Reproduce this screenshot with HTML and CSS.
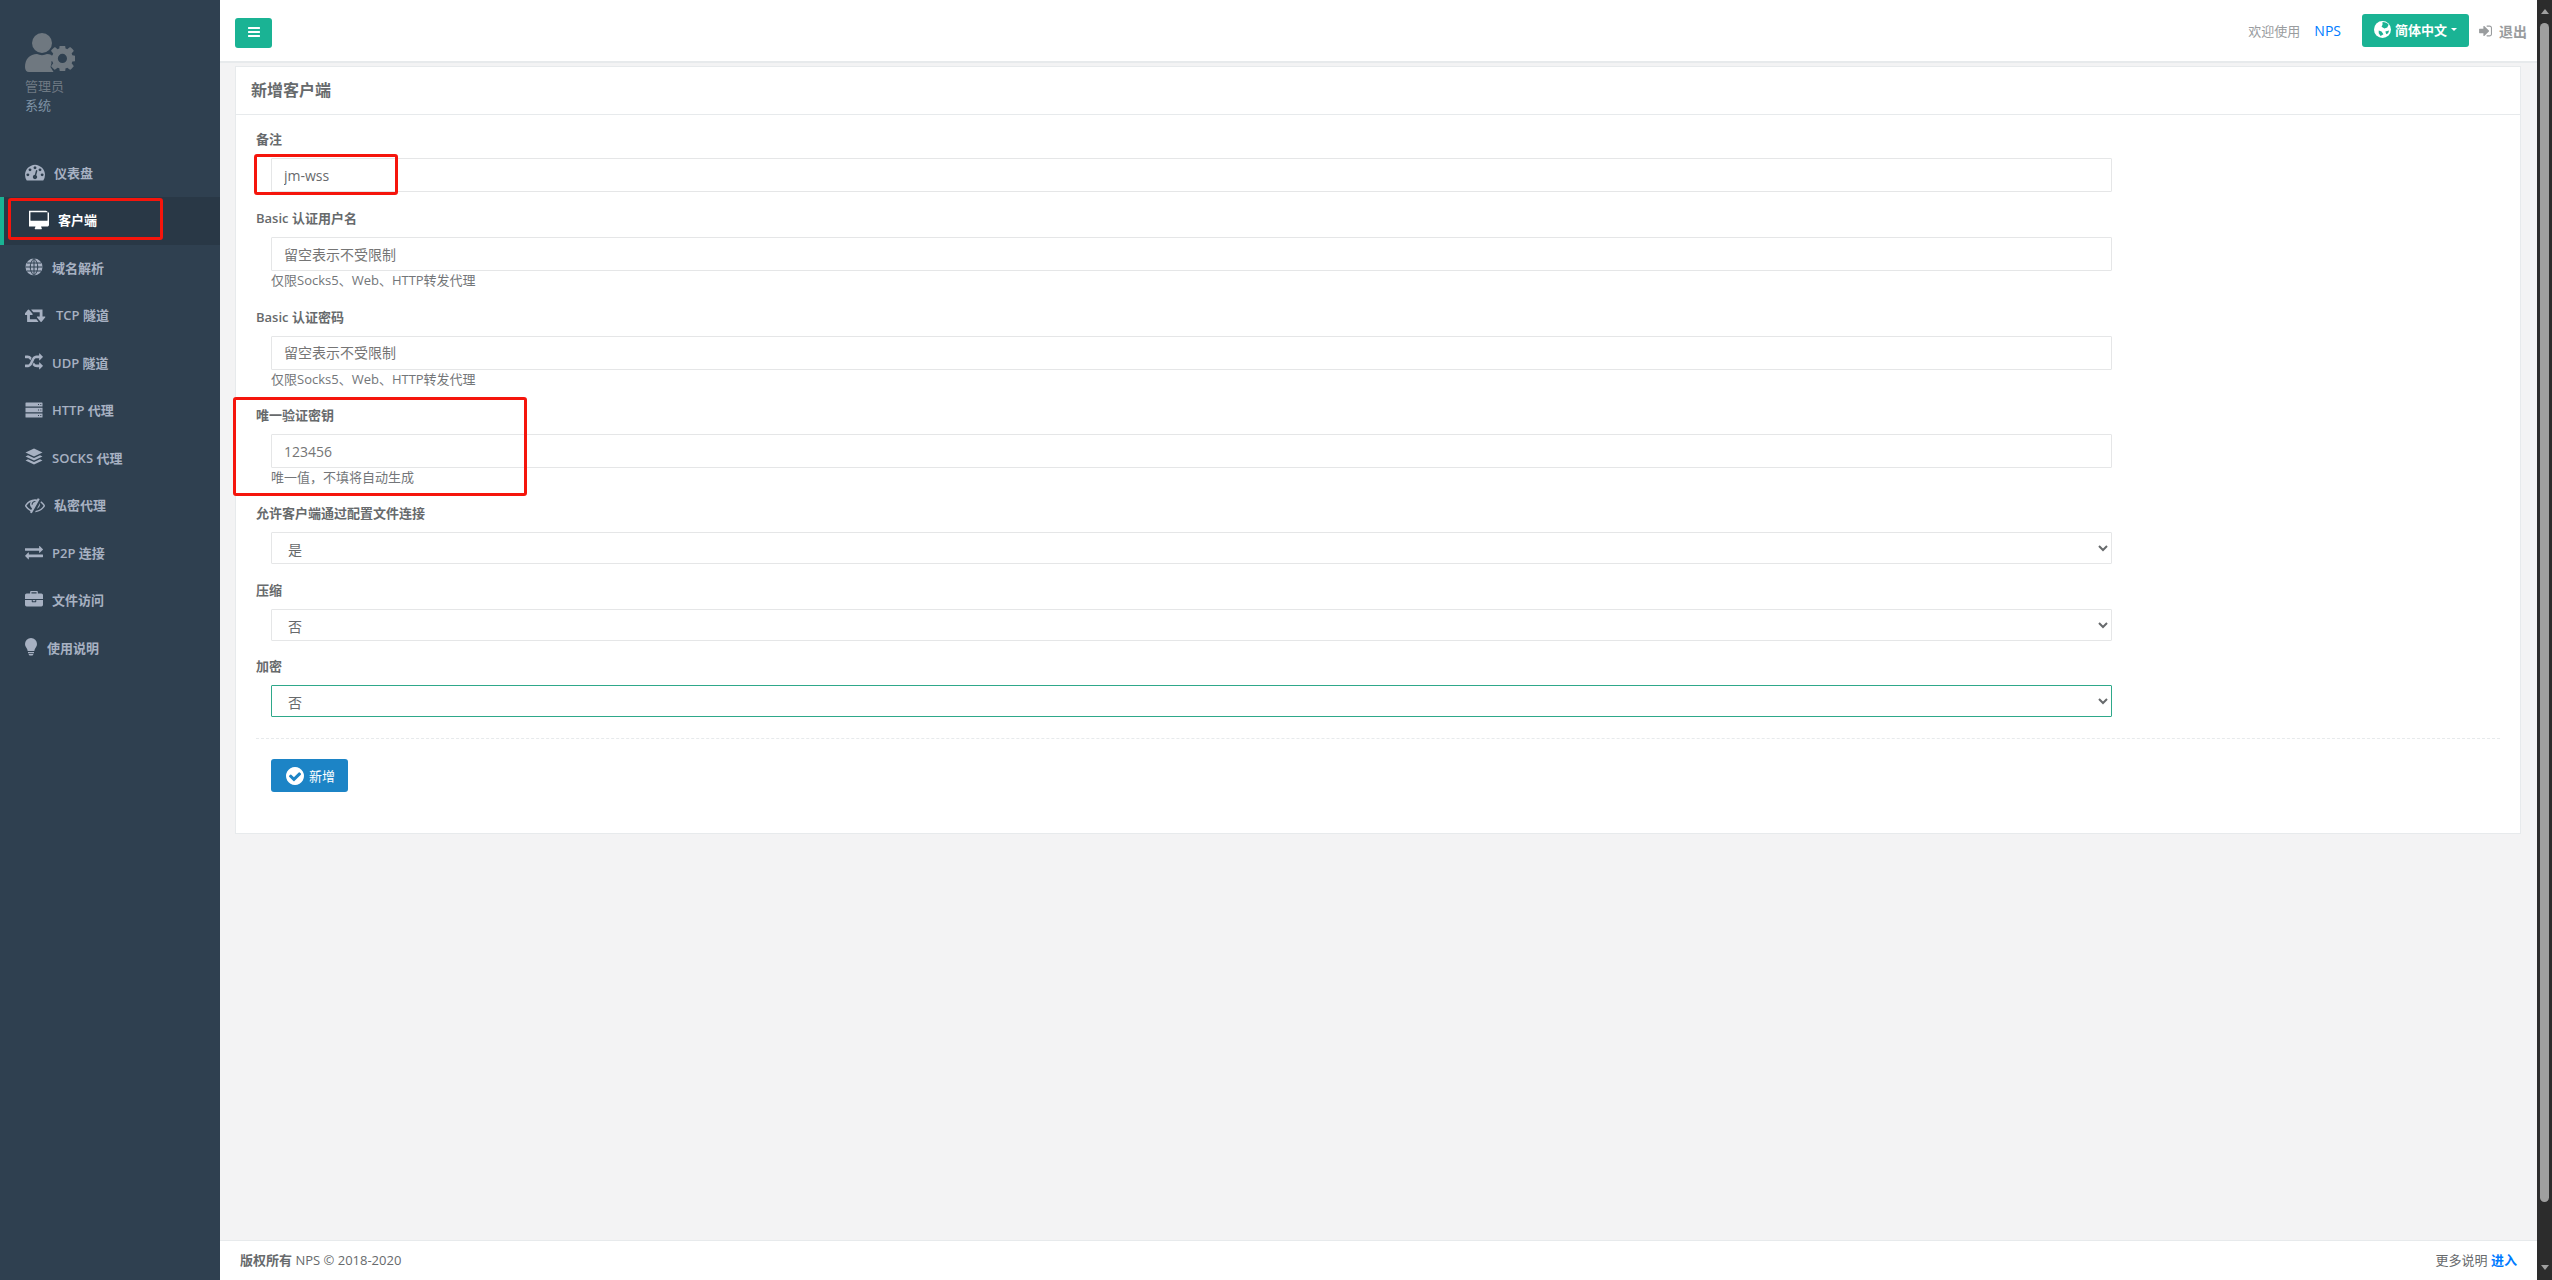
FILE: index.html
```html
<!DOCTYPE html>
<html lang="zh-CN">
<head>
  <meta charset="UTF-8" />
  <title>新增客户端</title>
  <link rel="stylesheet" href="styles.css">
</head>
<body>
  <div class="wrapper">
    <nav class="sidebar">
      <div class="profile">
        <svg class="avatar" viewBox="0 0 50 40">
          <circle cx="17" cy="10" r="10"/>
          <path d="M0 34c0-8 5-13 12-13 3 1.500 7 1.500 10 0 1.500 0 3 .3 4.500 1l-1 3 1 5-1 4 3 5H4c-2.500 0-4-2-4-5z"/>
          <svg x="25" y="13" width="25" height="25" viewBox="200 200 1400 1400"><path d="M1152 896q0-106-75-181t-181-75-181 75-75 181 75 181 181 75 181-75 75-181zm512-109v222q0 12-8 23t-20 13l-185 28q-19 54-39 91 35 50 107 138 10 12 10 25t-9 23q-27 37-99 108t-94 71q-12 0-26-9l-138-108q-44 23-91 38-16 136-29 186-7 28-36 28h-222q-14 0-24.500-8.500t-11.500-21.500l-28-184q-49-16-90-37l-141 107q-10 9-25 9-14 0-25-11-126-114-165-168-7-10-7-23 0-12 8-23 15-21 51-66.500t54-70.500q-27-50-41-99l-183-27q-13-2-21-12.500t-8-23.500v-222q0-12 8-23t19-13l186-28q14-46 39-92-40-57-107-138-10-12-10-24 0-10 9-23 26-36 98.500-107.500t94.500-71.500q13 0 26 10l138 107q44-23 91-38 16-136 29-186 7-28 36-28h222q14 0 24.500 8.500t11.500 21.500l28 184q49 16 90 37l142-107q9-9 24-9 13 0 25 10 129 119 165 170 7 8 7 22 0 12-8 23-15 21-51 66.500t-54 70.500q26 50 41 98l183 28q13 2 21 12.500t8 23.500z"/></svg>
        </svg>
        <div class="profile-name">管理员</div>
        <div class="profile-role">系统</div>
      </div>
      <ul class="nav">
        <li class="nav-item">
          <span class="nav-icon w29"><svg class="icon i20" viewBox="0 0 1792 1792"><path d="M384 1152q0-53-37.500-90.500t-90.500-37.500-90.500 37.500-37.500 90.500 37.500 90.500 90.500 37.500 90.500-37.500 37.500-90.500zm192-448q0-53-37.500-90.500t-90.500-37.500-90.500 37.500-37.500 90.500 37.500 90.500 90.500 37.500 90.500-37.500 37.500-90.500zm428 481l101-382q6-26-7.500-48.500t-38.500-29.500-48 6.500-30 39.500l-101 382q-60 5-107 43.500t-63 98.500q-20 77 20 146t117 89 146-20 89-117q16-60-6-117t-72-91zm660-33q0-53-37.500-90.500t-90.500-37.500-90.500 37.500-37.500 90.500 37.500 90.500 90.500 37.500 90.500-37.500 37.500-90.500zm-640-640q0-53-37.500-90.500t-90.500-37.500-90.500 37.500-37.500 90.500 37.500 90.500 90.500 37.500 90.500-37.500 37.500-90.500zm448 192q0-53-37.500-90.500t-90.500-37.500-90.500 37.500-37.500 90.500 37.500 90.500 90.500 37.500 90.500-37.500 37.500-90.500zm320 448q0 261-141 483-19 29-54 29h-1402q-35 0-54-29-141-221-141-483 0-182 71-348t191-286 286-191 348-71 348 71 286 191 191 286 71 348z"/></svg></span>
          仪表盘
        </li>
        <li class="nav-item active">
          <span class="nav-icon w29"><svg class="icon i20" viewBox="0 0 1792 1792"><path d="M1664 928v-704q0-13-9.500-22.500t-22.500-9.500h-1472q-13 0-22.500 9.500t-9.500 22.500v704q0 13 9.500 22.500t22.500 9.500h1472q13 0 22.500-9.500t9.500-22.500zm128-704v1088q0 66-47 113t-113 47h-544q0 37 16 77.500t32 71 16 43.500q0 26-19 45t-45 19h-512q-26 0-45-19t-19-45q0-14 16-44t32-70 16-78h-544q-66 0-113-47t-47-113v-1088q0-66 47-113t113-47h1472q66 0 113 47t47 113z"/></svg></span>
          客户端
        </li>
        <li class="nav-item">
          <span class="nav-icon w27"><svg class="icon i18" viewBox="0 0 18 18"><circle cx="9" cy="9" r="8.500"/><path class="cut" d="M9 .5v17M.5 9h17M2 5h14M2 13h14M9 .5C4 5 4 13 9 17.500M9 .5c5 4.500 5 12.500 0 17"/></svg></span>
          域名解析
        </li>
        <li class="nav-item">
          <span class="nav-icon w31"><svg class="icon i21" viewBox="0 0 1920 1792"><path d="M1216 1504q0 13-9.500 22.500t-22.500 9.500h-960q-8 0-13.500-2t-9-7-5.500-8-3-11.500-1-11.500v-600h-192q-26 0-45-19t-19-45q0-24 15-41l320-384q19-22 49-22t49 22l320 384q15 17 15 41 0 26-19 45t-45 19h-192v384h576q16 0 25 11l160 192q7 10 7 21zm640-416q0 24-15 41l-320 384q-20 23-49 23t-49-23l-320-384q-15-17-15-41 0-26 19-45t45-19h192v-384h-576q-16 0-25-12l-160-192q-7-9-7-20 0-13 9.500-22.500t22.500-9.500h960q8 0 13.500 2t9 7 5.500 8 3 11.500 1 11.500v600h192q26 0 45 19t19 45z"/></svg></span>
          TCP 隧道
        </li>
        <li class="nav-item">
          <span class="nav-icon w27"><svg class="icon i18" viewBox="0 0 1792 1792"><path d="M666 481q-60 92-137 273-22-45-37-72.500t-40.500-63.500-51-56.500-63-35-81.500-14.500h-224q-14 0-23-9t-9-23v-192q0-14 9-23t23-9h224q250 0 410 225zm1126 799q0 14-9 23l-320 320q-9 9-23 9-13 0-22.500-9.500t-9.500-22.500v-192q-32 0-85 .5t-81 1-73-1-71-5-64-10.500-63-18.500-58-28.500-59-40-55-53.500-56-69.500q59-93 136-273 22 45 37 72.500t40.500 63.500 51 56.500 63 35 81.500 14.500h256v-192q0-14 9-23t23-9q12 0 24 10l319 319q9 9 9 23zm0-896q0 14-9 23l-320 320q-9 9-23 9-13 0-22.500-9.500t-9.500-22.500v-192h-256q-48 0-87 15t-69 45-51 61-45 77q-32 62-78 171-29 66-49.500 111t-54 105-64 100-74 83-90 68.500-106.500 42-128 16.500h-224q-14 0-23-9t-9-23v-192q0-14 9-23t23-9h224q48 0 87-15t69-45 51-61 45-77q32-62 78-171 29-66 49.500-111t54-105 64-100 74-83 90-68.500 106.500-42 128-16.500h256v-192q0-14 9-23t23-9q12 0 24 10l319 319q9 9 9 23z"/></svg></span>
          UDP 隧道
        </li>
        <li class="nav-item">
          <span class="nav-icon w27"><svg class="icon i18" viewBox="0 0 18 18"><path d="M1 1.500h16a.5.500 0 0 1 .5.500v3.500H.5V2a.5.500 0 0 1 .5-.5zM.5 6.700h17v4.600H.5zM.5 12.500h17V16a.5.500 0 0 1-.5.500H1a.5.500 0 0 1-.5-.5z"/><path class="dots" d="M13 3.500h1M15.300 3.500h1M13 9h1M15.300 9h1M13 14.500h1M15.300 14.500h1"/></svg></span>
          HTTP 代理
        </li>
        <li class="nav-item">
          <span class="nav-icon w27"><svg class="icon i18" viewBox="0 0 18 18"><path d="M9 .5l8.500 4L9 8.500.5 4.500zM3 7.300l6 2.800 6-2.800 2.500 1.200L9 12.500.5 8.500zM3 11.300l6 2.800 6-2.800 2.500 1.200L9 16.500.5 12.500z"/></svg></span>
          SOCKS 代理
        </li>
        <li class="nav-item">
          <span class="nav-icon w29"><svg class="icon i20" viewBox="0 0 1792 1792"><path d="M555 1335l78-141q-87-63-136-159t-49-203q0-121 61-225-229 117-381 353 167 258 427 375zm389-759q0-20-14-34t-34-14q-125 0-214.500 89.500t-89.500 214.500q0 20 14 34t34 14 34-14 14-34q0-86 61-147t147-61q20 0 34-14t14-34zm363-191q0 7-1 9-106 189-316 567t-315 566l-49 89q-10 16-28 16-12 0-134-70-16-10-16-28 0-12 44-87-143-65-263.500-173t-208.500-245q-20-31-20-69t20-69q153-235 380-371t496-136q89 0 180 17l54-97q10-16 28-16 5 0 18 6t31 15.500 33 18.500 31.500 18.500 19.500 11.500q16 10 16 27zm37 447q0 139-79 253.500t-209 164.500l280-502q8 45 8 84zm448 128q0 35-20 69-39 64-109 145-150 172-347.500 267t-419.500 95l74-132q212-18 392.500-137t301.500-307q-115-179-282-294l63-112q95 64 182.500 153t144.500 184q20 34 20 69z"/></svg></span>
          私密代理
        </li>
        <li class="nav-item">
          <span class="nav-icon w27"><svg class="icon i18" viewBox="0 0 1792 1792"><path d="M1792 1184v192q0 13-9.500 22.500t-22.500 9.500h-1376v192q0 13-9.500 22.500t-22.500 9.500q-12 0-24-10l-319-320q-9-9-9-22 0-14 9-23l320-320q9-9 23-9 13 0 22.500 9.500t9.500 22.500v192h1376q13 0 22.500 9.500t9.500 22.500zm0-544q0 14-9 23l-320 320q-9 9-23 9-13 0-22.500-9.500t-9.500-22.500v-192h-1376q-13 0-22.500-9.500t-9.500-22.500v-192q0-13 9.500-22.500t22.500-9.500h1376v-192q0-14 9-23t23-9q12 0 24 10l319 319q9 9 9 23z"/></svg></span>
          P2P 连接
        </li>
        <li class="nav-item">
          <span class="nav-icon w27"><svg class="icon i18" viewBox="0 0 1792 1792"><path d="M640 256h512v-128h-512v128zm1152 640v480q0 66-47 113t-113 47h-1472q-66 0-113-47t-47-113v-480h672v160q0 26 19 45t45 19h320q26 0 45-19t19-45v-160h672zm-768 0v128h-256v-128h256zm768-480v384h-1792v-384q0-66 47-113t113-47h352v-160q0-40 28-68t68-28h576q40 0 68 28t28 68v160h352q66 0 113 47t47 113z"/></svg></span>
          文件访问
        </li>
        <li class="nav-item">
          <span class="nav-icon w22"><svg class="icon i18 bulb" viewBox="0 0 12 18"><path d="M6 0a6 6 0 0 1 6 6c0 2.500-1.700 3.700-2.300 5.500-.2.500-.3 1-.3 1.500H2.600c0-.5-.1-1-.3-1.500C1.700 9.700 0 8.500 0 6a6 6 0 0 1 6-6zM3 14h6v1.200H3zM3.500 16h5L7.500 17.500h-3z"/></svg></span>
          使用说明
        </li>
      </ul>
    </nav>

    <div class="main">
      <header class="topbar">
        <button class="menu-btn"><svg class="icon i14" viewBox="0 0 1792 1792"><path d="M1664 1344v128q0 26-19 45t-45 19h-1408q-26 0-45-19t-19-45v-128q0-26 19-45t45-19h1408q26 0 45 19t19 45zm0-512v128q0 26-19 45t-45 19h-1408q-26 0-45-19t-19-45v-128q0-26 19-45t45-19h1408q26 0 45 19t19 45zm0-512v128q0 26-19 45t-45 19h-1408q-26 0-45-19t-19-45v-128q0-26 19-45t45-19h1408q26 0 45 19t19 45z"/></svg></button>
        <div class="topbar-right">
          <span class="welcome">欢迎使用</span>
          <a class="brand">NPS</a>
          <button class="lang-btn">
            <svg class="icon i17" viewBox="0 0 18 18"><circle cx="9" cy="9" r="9" fill="#fff"/><path class="land" d="M9 1c3 0 5 1 6.500 3L14 7l-3 1-3-2 1-2zM5 10l3 1 2 3-3 2-2-3zM12 11l4-1-1 3-2 1z"/></svg>
            简体中文
            <span class="caret"></span>
          </button>
          <a class="logout">
            <svg class="icon i14" viewBox="0 0 1664 1664"><path transform="translate(0 -64)" d="M1312 896q0 26-19 45l-544 544q-19 19-45 19t-45-19-19-45v-288h-448q-26 0-45-19t-19-45v-384q0-26 19-45t45-19h448v-288q0-26 19-45t45-19 45 19l544 544q19 19 19 45zm352-352v704q0 119-84.500 203.500t-203.500 84.500h-320q-13 0-22.500-9.500t-9.500-22.500q0-4-1-20t-.5-26.500 3-23.500 10-19.500 20.500-6.500h320q66 0 113-47t47-113v-704q0-66-47-113t-113-47h-312l-11.500-1-11.500-3-8-5.500-7-9-2-13.500q0-4-1-20t-.5-26.500 3-23.500 10-19.500 20.500-6.500h320q119 0 203.500 84.500t84.500 203.500z"/></svg>
            退出
          </a>
        </div>
      </header>

      <main class="content">
        <section class="card">
          <h5 class="card-title">新增客户端</h5>
          <form class="card-body">
            <div class="form-group">
              <label>备注</label>
              <div class="field"><input type="text" value="jm-wss"></div>
            </div>
            <div class="form-group">
              <label>Basic 认证用户名</label>
              <div class="field">
                <input type="text" placeholder="留空表示不受限制">
                <span class="help">仅限Socks5、Web、HTTP转发代理</span>
              </div>
            </div>
            <div class="form-group">
              <label>Basic 认证密码</label>
              <div class="field">
                <input type="text" placeholder="留空表示不受限制">
                <span class="help">仅限Socks5、Web、HTTP转发代理</span>
              </div>
            </div>
            <div class="form-group last-input">
              <label>唯一验证密钥</label>
              <div class="field">
                <input type="text" placeholder="123456">
                <span class="help">唯一值，不填将自动生成</span>
              </div>
            </div>
            <div class="form-group">
              <label>允许客户端通过配置文件连接</label>
              <div class="field"><select><option>是</option><option>否</option></select></div>
            </div>
            <div class="form-group tight">
              <label>压缩</label>
              <div class="field"><select><option>否</option><option>是</option></select></div>
            </div>
            <div class="form-group">
              <label>加密</label>
              <div class="field"><select class="focused"><option>否</option><option>是</option></select></div>
            </div>
            <div class="divider"></div>
            <div class="field">
              <button type="button" class="save-btn">
                <svg class="icon i18" viewBox="0 0 1536 1536"><path transform="translate(-128 -128)" d="M1412 734q0-28-18-46l-91-90q-19-19-45-19t-45 19l-408 407-226-226q-19-19-45-19t-45 19l-91 90q-18 18-18 46 0 27 18 45l362 362q19 19 45 19 27 0 46-19l543-543q18-18 18-45zm252 162q0 209-103 385.500t-279.500 279.500-385.500 103-385.500-103-279.500-279.500-103-385.500 103-385.500 279.500-279.500 385.500-103 385.500 103 279.500 279.500 103 385.500z"/></svg>
                新增
              </button>
            </div>
          </form>
        </section>
      </main>

      <footer class="footer">
        <div><strong>版权所有</strong> NPS © 2018-2020</div>
        <div>更多说明 <a class="more">进入</a></div>
      </footer>
    </div>

    <div class="scrollbar">
      <span class="arrow-up"></span>
      <span class="thumb"></span>
      <span class="arrow-down"></span>
    </div>
  </div>

  <!-- red annotation boxes drawn over the screenshot -->
  <div class="mark mark-nav"></div>
  <div class="mark mark-remark"></div>
  <div class="mark mark-key"></div>
</body>
</html>
```

FILE: styles.css
```css
:root {
  --navy: #2f4050;
  --navy-dark: #293846;
  --teal: #1ab394;
  --blue: #1c84c6;
  --link: #007bff;
  --text: #676a6c;
  --line: #e7eaec;
  --input-line: #e5e6e7;
  --font: "Open Sans", "Noto Sans CJK SC", sans-serif;
}

* {
  box-sizing: border-box;
}

html, body {
  margin: 0;
  height: 100%;
  overflow: hidden;
}

body {
  font-family: var(--font);
  font-size: 13px;
  color: var(--text);
  background: #f3f3f4;
}

button, input, select {
  font-family: var(--font);
}

.wrapper {
  display: flex;
  height: 1280px;
}

.icon {
  display: block;
  fill: currentColor;
}

.i14 { width: 14px; height: 14px; }
.i17 { width: 17px; height: 17px; }
.i18 { width: 18px; height: 18px; }
.i20 { width: 20px; height: 20px; }
.i21 { width: 21px; height: 20px; }

/* sidebar */
.sidebar {
  width: 220px;
  flex-shrink: 0;
  background: var(--navy);
}

.profile {
  height: 149.5px;
  padding: 33px 0 0 25px;
  line-height: 19px;
}

.avatar {
  display: block;
  width: 50px;
  height: 40px;
  margin-bottom: 4px;
  fill: #6f7880;
}

.profile-name {
  color: #6f7a84;
}

.profile-role {
  color: #7f93a6;
}

.nav {
  list-style: none;
  margin: 0;
  padding: 0;
}

.nav-item {
  display: flex;
  align-items: center;
  height: 47.5px;
  padding: 0 0 2px 25px;
  color: #a7b1c2;
  font-weight: 600;
}

.nav-item.active {
  background: var(--navy-dark);
  border-left: 4px solid var(--teal);
  color: #fff;
}

.nav-icon {
  flex-shrink: 0;
}

.w22 { width: 22px; }
.w27 { width: 27px; }
.w29 { width: 29px; }
.w31 { width: 31px; }

.cut {
  fill: none;
  stroke: var(--navy);
  stroke-width: 1;
}

.dots {
  fill: none;
  stroke: var(--navy);
  stroke-width: 1.200;
}

.bulb {
  width: 12px;
}

/* main column */
.main {
  flex: 1;
  display: flex;
  flex-direction: column;
  min-width: 0;
}

.topbar {
  display: flex;
  align-items: center;
  justify-content: space-between;
  flex-shrink: 0;
  height: 63px;
  padding: 0 10px 0 15px;
  background: #fff;
  border-bottom: 2px solid var(--line);
}

.menu-btn {
  display: flex;
  align-items: center;
  justify-content: center;
  width: 37px;
  height: 30px;
  margin-top: 5px;
  padding: 0 0 2px;
  border: none;
  border-radius: 3px;
  background: var(--teal);
  color: #fff;
}

.topbar-right {
  display: flex;
  align-items: center;
}

.welcome {
  margin-right: 14px;
  color: #999c9e;
}

.brand {
  margin-right: 21px;
  color: var(--link);
  font-size: 14px;
}

.lang-btn {
  display: flex;
  align-items: center;
  gap: 4px;
  width: 107px;
  height: 33px;
  padding: 0 0 2px 12px;
  border: none;
  border-radius: 3px;
  background: var(--teal);
  color: #fff;
  font-size: 13px;
  font-weight: 600;
}

.land {
  fill: var(--teal);
}

.caret {
  width: 0;
  height: 0;
  border-top: 3px solid #fff;
  border-left: 3px solid transparent;
  border-right: 3px solid transparent;
}

.logout {
  display: flex;
  align-items: center;
  gap: 7px;
  margin-left: 9px;
  color: #999c9e;
  font-size: 14px;
  font-weight: 600;
}

/* content */
.content {
  flex: 1;
  padding: 3px 16px 0 15px;
}

.card {
  background: #fff;
  border: 1px solid var(--line);
}

.card-title {
  margin: 0;
  height: 48px;
  padding: 0 15px;
  line-height: 46px;
  font-size: 16px;
  font-weight: 600;
  border-bottom: 1px solid var(--line);
}

.card-body {
  padding: 14px 20px 41px;
}

.form-group {
  margin-bottom: 16px;
}

.form-group.last-input {
  margin-bottom: 15.500px;
}

.form-group.tight {
  margin-bottom: 15px;
}

.form-group label {
  display: block;
  line-height: 20px;
  margin-bottom: 9px;
  font-weight: 600;
}

.field {
  padding-left: 15px;
}

.field input,
.field select {
  display: block;
  width: 1841px;
  height: 34px;
  padding: 6px 12px;
  border: 1px solid var(--input-line);
  border-radius: 1px;
  background: #fff;
  color: var(--text);
  font-size: 14px;
  outline: none;
}

.field select {
  height: 32px;
}

.field input::placeholder {
  color: #757575;
}

.field select.focused {
  border-color: #2ea88a;
}

.help {
  display: block;
  line-height: 19.500px;
  font-size: 13px;
  color: #737679;
}

.divider {
  border-top: 1px dashed var(--line);
  margin: 21px 0 20px;
}

.save-btn {
  display: flex;
  align-items: center;
  gap: 5px;
  width: 77px;
  height: 33px;
  padding: 0 0 0 15px;
  border: none;
  border-radius: 3px;
  background: var(--blue);
  color: #fff;
  font-size: 13px;
}

.footer {
  display: flex;
  justify-content: space-between;
  flex-shrink: 0;
  height: 40px;
  padding: 9px 20px 0 20px;
  line-height: 20px;
  background: #fff;
  border-top: 1px solid var(--line);
}

.footer strong {
  font-weight: 700;
}

.more {
  color: var(--link);
  font-weight: 700;
}

/* browser scrollbar from the screenshot */
.scrollbar {
  display: flex;
  flex-direction: column;
  align-items: center;
  width: 15px;
  flex-shrink: 0;
  background: #2c2c2c;
}

.arrow-up {
  margin-top: 9px;
  border-bottom: 5px solid #a0a0a0;
  border-left: 4.500px solid transparent;
  border-right: 4.500px solid transparent;
}

.thumb {
  width: 9px;
  height: 1179px;
  margin-top: 9px;
  border-radius: 4.500px;
  background: #9f9f9f;
}

.arrow-down {
  margin-top: 63px;
  border-top: 5px solid #a0a0a0;
  border-left: 4.500px solid transparent;
  border-right: 4.500px solid transparent;
}

/* annotations */
.mark {
  position: absolute;
  border: 3px solid #f5150c;
  border-radius: 3px;
}

.mark-nav {
  left: 8px;
  top: 198px;
  width: 155px;
  height: 42px;
}

.mark-remark {
  left: 254px;
  top: 154px;
  width: 144px;
  height: 41px;
}

.mark-key {
  left: 233px;
  top: 397px;
  width: 294px;
  height: 99px;
}
```
